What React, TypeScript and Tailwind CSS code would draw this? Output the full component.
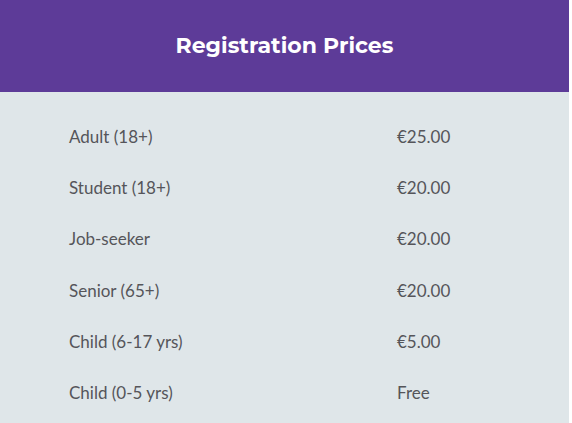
const prices = [
  { label: 'Adult (18+)', price: '€25.00' },
  { label: 'Student (18+)', price: '€20.00' },
  { label: 'Job-seeker', price: '€20.00' },
  { label: 'Senior (65+)', price: '€20.00' },
  { label: 'Child (6-17 yrs)', price: '€5.00' },
  { label: 'Child (0-5 yrs)', price: 'Free' },
];

export default function App() {
  return (
    <div className="min-h-[423px] w-[572px] bg-white">
      <div className="w-[569px] bg-[#dfe6e9]">
        <div className="flex h-[92px] items-center justify-center bg-[#5d3b98] pb-[2px]">
          <h2 className="font-['Montserrat','Inter','Liberation_Sans',sans-serif] text-[22px] font-bold text-white">
            Registration Prices
          </h2>
        </div>
        <div className="pb-[5px] pl-[69px] pt-[19px] font-['Lato','Open_Sans',sans-serif] text-[17px] text-[#55555a]">
          {prices.map((row) => (
            <div key={row.label} className="grid h-[51.3px] grid-cols-[328px_1fr] items-center">
              <span>{row.label}</span>
              <span>{row.price}</span>
            </div>
          ))}
        </div>
      </div>
    </div>
  );
}
